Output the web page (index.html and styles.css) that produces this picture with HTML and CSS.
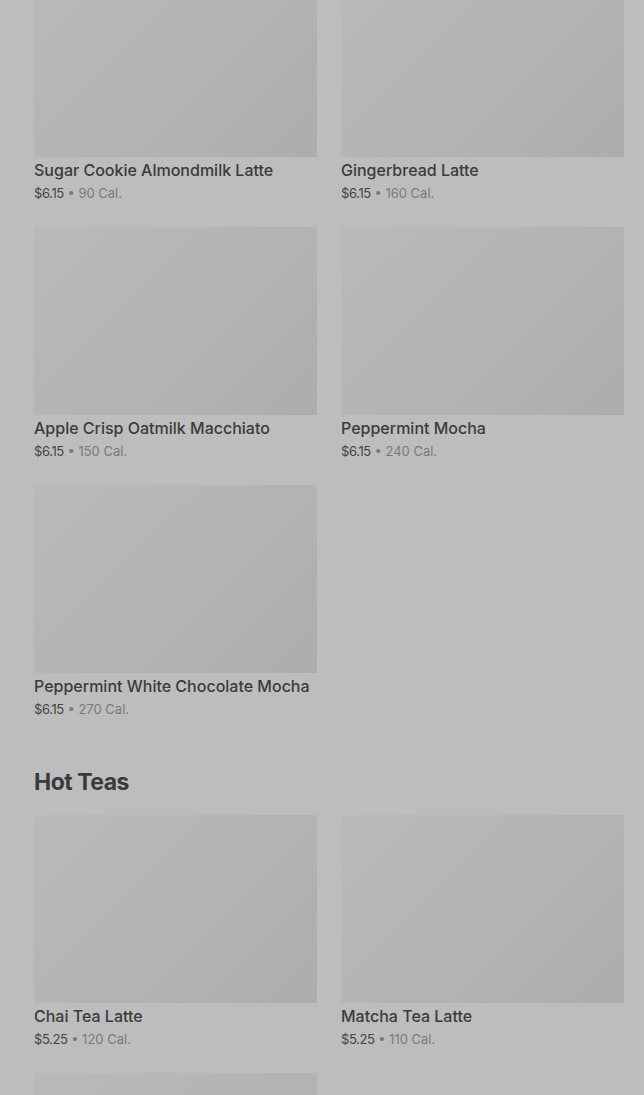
FILE: index.html
```html
<!DOCTYPE html>
<html lang="en">
  <head>
    <meta charset="utf-8" />
    <meta name="viewport" content="width=device-width,initial-scale=1.0" />
    <title>Menu</title>
    <link rel="stylesheet" href="styles.css">
  </head>
  <body>
    <div class="page">
      <section class="menu-section">
        <div class="grid">
          <div class="item">
            <div class="thumb"></div>
            <div class="name">Sugar Cookie Almondmilk Latte</div>
            <div class="meta"><span class="price">$6.15</span> • 90 Cal.</div>
          </div>
          <div class="item">
            <div class="thumb"></div>
            <div class="name">Gingerbread Latte</div>
            <div class="meta"><span class="price">$6.15</span> • 160 Cal.</div>
          </div>
          <div class="item">
            <div class="thumb"></div>
            <div class="name">Apple Crisp Oatmilk Macchiato</div>
            <div class="meta"><span class="price">$6.15</span> • 150 Cal.</div>
          </div>
          <div class="item">
            <div class="thumb"></div>
            <div class="name">Peppermint Mocha</div>
            <div class="meta"><span class="price">$6.15</span> • 240 Cal.</div>
          </div>
          <div class="item">
            <div class="thumb"></div>
            <div class="name">Peppermint White Chocolate Mocha</div>
            <div class="meta"><span class="price">$6.15</span> • 270 Cal.</div>
          </div>
        </div>
      </section>

      <section class="menu-section">
        <h2 class="section-title">Hot Teas</h2>
        <div class="grid">
          <div class="item">
            <div class="thumb"></div>
            <div class="name">Chai Tea Latte</div>
            <div class="meta"><span class="price">$5.25</span> • 120 Cal.</div>
          </div>
          <div class="item">
            <div class="thumb"></div>
            <div class="name">Matcha Tea Latte</div>
            <div class="meta"><span class="price">$5.25</span> • 110 Cal.</div>
          </div>
          <div class="item">
            <div class="thumb"></div>
          </div>
        </div>
      </section>
    </div>
  </body>
</html>
```

FILE: styles.css
```css
html,
body {
  margin: 0;
  height: 100%;
  overflow: hidden;
  background: #bdbdbd;
}
body {
  font-family: Inter, "Noto Sans", "Liberation Sans", sans-serif;
  color: #3a3a3a;
}
.page {
  margin-top: -31px;
  padding: 0 20px 0 34px;
}
.grid {
  display: grid;
  grid-template-columns: 283px 283px;
  column-gap: 24px;
  row-gap: 24px;
}
.item {
  height: 234px;
}
.thumb {
  height: 188px;
  background: linear-gradient(135deg, #b9b9b9 0%, #b4b4b4 50%, #adadad 100%);
}
.name {
  margin-top: 3px;
  font-size: 16px;
  line-height: 20px;
  font-weight: 500;
  color: #3b3b3b;
  white-space: nowrap;
}
.meta {
  margin-top: 4px;
  font-size: 13px;
  line-height: 18px;
  color: #7a7a7a;
}
.price {
  color: #444;
  letter-spacing: -0.4px;
}
.section-title {
  margin: 47px 0 17px;
  font-size: 23px;
  line-height: 32px;
  font-weight: 700;
  color: #3a3a3a;
  letter-spacing: -0.5px;
}
```
